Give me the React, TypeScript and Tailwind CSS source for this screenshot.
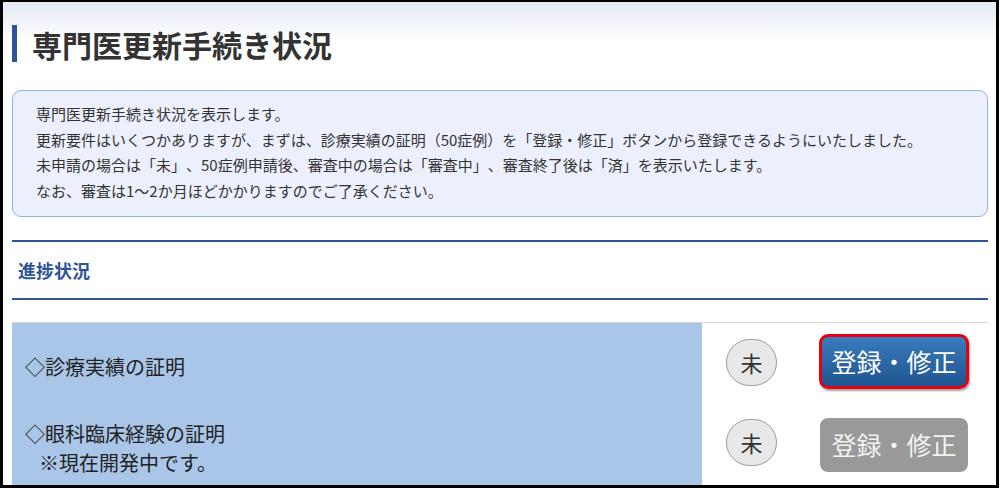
import React from "react"

const jp = { fontFamily: '"Noto Sans CJK JP", "Noto Sans", sans-serif' }

const notes = [
	"専門医更新手続き状況を表示します。",
	"更新要件はいくつかありますが、まずは、診療実績の証明（50症例）を「登録・修正」ボタンから登録できるようにいたしました。",
	"未申請の場合は「未」、50症例申請後、審査中の場合は「審査中」、審査終了後は「済」を表示いたします。",
	"なお、審査は1～2か月ほどかかりますのでご了承ください。",
]

const StatusBadge = ({ label }: { label: string }) => (
	<div className="flex h-[47px] w-[51px] items-center justify-center rounded-full border border-[#9a9a9a] bg-[#e8e8e8] text-[22px] text-[#333]">
		{label}
	</div>
)

const EditButton = ({ active }: { active: boolean }) =>
	active ? (
		<button className="flex h-[55px] w-[150px] items-center justify-center rounded-[9px] border-[3px] border-[#e60012] bg-gradient-to-b from-[#3a7cbd] to-[#1f5590] text-[25px] text-white shadow-[1px_2px_2px_rgba(0,0,0,0.35)]">
			登録・修正
		</button>
	) : (
		<button className="flex h-[54px] w-[148px] items-center justify-center rounded-[8px] bg-[#999999] text-[25px] text-[#f2f2f2]">
			登録・修正
		</button>
	)

export default function App() {
	return (
		<div className="h-[489px] w-[1000px] bg-white [text-spacing-trim:space-all]" style={jp}>
			<div className="h-[488px] w-[999px] overflow-hidden border-t-2 border-r-[3px] border-b-[3px] border-l-[3px] border-black">
				<div className="h-full bg-gradient-to-b from-[#e3eaf3] via-white via-[40px] to-white pl-[9px] pr-[8px] pt-[23px]">
					{/* title */}
					<div className="flex h-[37px] items-center">
						<div className="h-[37px] w-[5px] bg-[#2f5597]" />
						<h1 className="ml-[15px] text-[30px] font-bold leading-none text-[#333]">専門医更新手続き状況</h1>
					</div>

					{/* info box */}
					<div className="mt-[28px] h-[127px] rounded-[9px] border-[1.5px] border-[#8eb3dc] bg-[#ecf0fc] pl-[23px] pt-[10px] text-[15px] leading-[25.6px] text-[#333]">
						{notes.map((n) => (
							<p key={n} className="whitespace-nowrap">
								{n}
							</p>
						))}
					</div>

					{/* progress heading */}
					<div className="mt-[23px] h-[2px] bg-[#2f5597]" />
					<div className="flex h-[56px] items-center pl-[6px] text-[18px] font-bold text-[#2f5597]">進捗状況</div>
					<div className="h-[2px] bg-[#2f5597]" />

					{/* table */}
					<div className="mt-[22px] border-t border-[#d6d6d6]">
						<div className="flex h-[84px]">
							<div className="flex w-[690px] items-center bg-[#a9c6e9] pl-[13px] pt-[4px] text-[20px] text-[#222]">
								◇診療実績の証明
							</div>
							<div className="flex flex-1 items-start pl-[24px] pt-[11px]">
								<div className="mt-[5px]">
									<StatusBadge label="未" />
								</div>
								<div className="ml-[42px]">
									<EditButton active />
								</div>
							</div>
						</div>
						<div className="flex h-[84px]">
							<div className="flex w-[690px] flex-col bg-[#a9c6e9] pl-[13px] pt-[12px] text-[20px] leading-[29px] text-[#222]">
								<span>◇眼科臨床経験の証明</span>
								<span className="pl-[14px]">※現在開発中です。</span>
							</div>
							<div className="flex flex-1 items-start pt-[11px] pl-[24px]">
								<div className="mt-[1px]">
									<StatusBadge label="未" />
								</div>
								<div className="ml-[43px]">
									<EditButton active={false} />
								</div>
							</div>
						</div>
					</div>
				</div>
			</div>
		</div>
	)
}
